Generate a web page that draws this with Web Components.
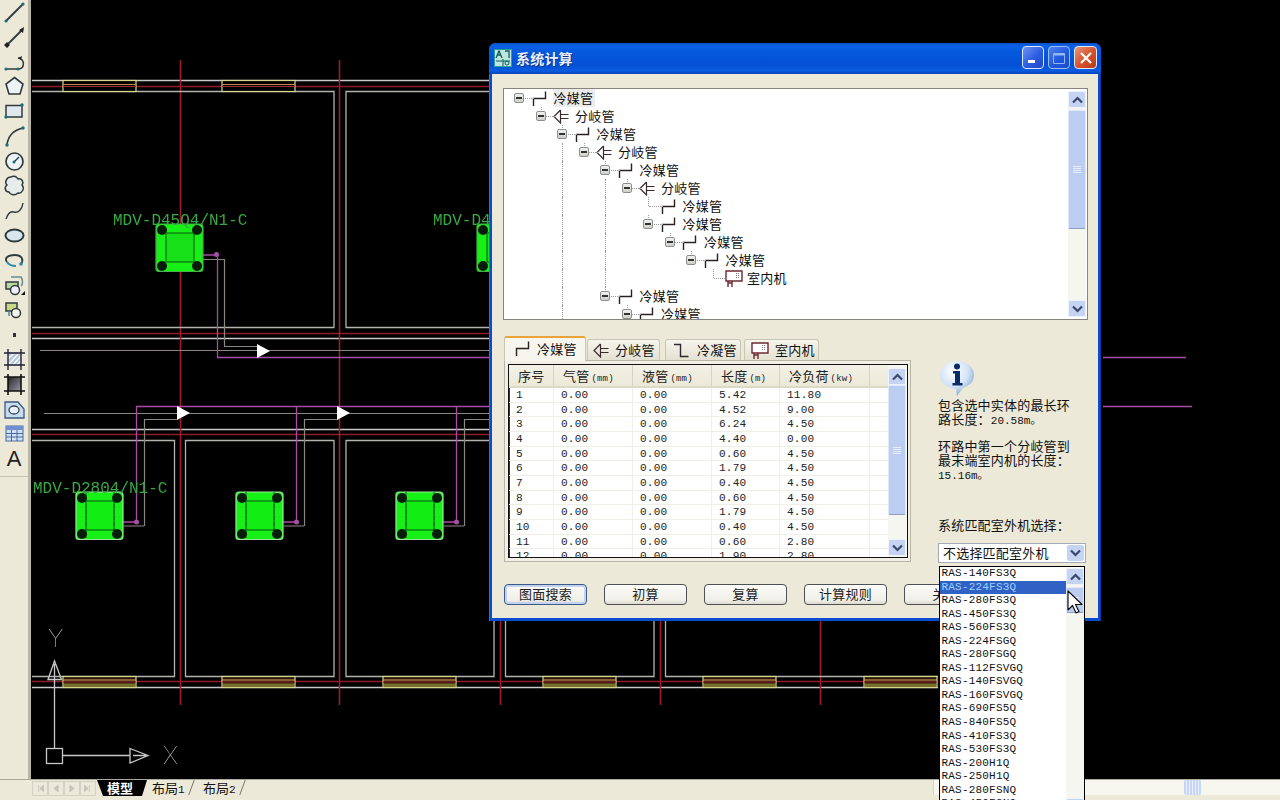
<!DOCTYPE html>
<html lang="zh"><head><meta charset="utf-8"><title>系统计算</title>
<style>
html,body{margin:0;padding:0;width:1280px;height:800px;overflow:hidden;background:#ece9d8;font-family:"Noto Sans CJK SC",sans-serif}
</style></head><body>
<cad-app>
  <cad-toolbar slot="tools"></cad-toolbar>
  <cad-drawing slot="canvas"></cad-drawing>
  <cad-status slot="status"></cad-status>
  <xp-window slot="window" caption="系统计算"><calc-dialog></calc-dialog></xp-window>
</cad-app>
<script>
const CJK='"Noto Sans CJK SC",sans-serif', MONO='"Liberation Mono","Noto Sans CJK SC",monospace';
function def(name,html,init){
  customElements.define(name,class extends HTMLElement{
    connectedCallback(){
      if(this.shadowRoot)return;
      const s=this.attachShadow({mode:'open'});
      s.innerHTML=typeof html==='function'?html(this):html;
      if(init)init(this,s);
    }
  });
}
const ICON={
 pipe:'<svg width="15" height="15" viewBox="0 0 15 15"><path d="M1.5 15V7.5H13.5V.5" fill="none" stroke="#2a2022" stroke-width="1.4"/></svg>',
 branch:'<svg width="16" height="15" viewBox="0 0 16 15"><path d="M7.5 1L1 7.5L7.5 14V1M7.5 5.5H15.5M7.5 9.5H15.5" fill="none" stroke="#3a2a2c" stroke-width="1.2"/></svg>',
 cond:'<svg width="16" height="15" viewBox="0 0 16 15"><path d="M1 1.5H7.5V13.5H15.5" fill="none" stroke="#2a2a30" stroke-width="1.4"/></svg>',
 unit:'<svg width="18" height="17" viewBox="0 0 18 17"><path d="M1 1H17V11H1ZM3 11V17M7 11V17M3 13H7" fill="#fff" stroke="#6e2a30" stroke-width="1.4"/><path d="M11 3h1v1h-1zM13 3h1v1h-1zM11 5h1v1h-1zM13 5h1v1h-1zM11 7h1v1h-1zM13 7h1v1h-1z" fill="#777"/></svg>'
};
/* ---------- toolbar ---------- */
const S='#2f3a3c', T='#1f6f78';
const TOOLS=[
 `<path d="M3 20L20 3" stroke="${S}" stroke-width="1.8"/><circle cx="3" cy="20" r="1.6" fill="${T}"/><circle cx="20" cy="3" r="1.6" fill="${T}"/>`,
 `<path d="M3 20L20 3" stroke="${S}" stroke-width="1.8"/><path d="M1 19l3 3 3-3-3-3zM16 4l5-3-1 6z" fill="#222"/>`,
 `<path d="M3 19H16C22 18 22 9 15 8" fill="none" stroke="${S}" stroke-width="1.5"/><path d="M15 8l4-2-1 4z" fill="#222"/><circle cx="3" cy="19" r="1.6" fill="${T}"/><circle cx="15" cy="19" r="1.6" fill="${T}"/>`,
 `<path d="M11.500 2.500L20 9 17 19H6L3 9Z" fill="#eef4f4" stroke="${S}" stroke-width="1.6"/>`,
 `<path d="M3 5.500H19V17H3Z" fill="#dfe9ee" stroke="${S}" stroke-width="1.5"/><circle cx="19" cy="5" r="1.7" fill="${T}"/><circle cx="3" cy="17" r="1.7" fill="${T}"/>`,
 `<path d="M4 20C5 11 11 5 20 3" fill="none" stroke="${S}" stroke-width="1.6"/><circle cx="4" cy="20" r="1.7" fill="${T}"/><circle cx="20" cy="3" r="1.7" fill="${T}"/>`,
 `<circle cx="11.500" cy="11.500" r="8.500" fill="#eef3f6" stroke="${S}" stroke-width="1.7"/><path d="M11 12L16 7" stroke="#245" stroke-width="1.4"/><circle cx="11" cy="12" r="1.500" fill="${T}"/>`,
 `<path d="M8 3C11 1 14 3 15 5C19 4 21 8 19 11C22 14 19 20 15 19C12 22 7 21 6 18C2 18 1 13 4 11C1 8 4 3 8 3Z" fill="#e6ecec" stroke="${S}" stroke-width="1.5"/>`,
 `<path d="M3 20C5 14 8 12 11 13C15 14 19 11 20 4" fill="none" stroke="${S}" stroke-width="1.4"/>`,
 `<ellipse cx="11.500" cy="11.500" rx="9" ry="6" fill="#d8e6ee" stroke="${S}" stroke-width="2"/>`,
 `<path d="M18 15C21 11 19 6 12 6C5 6 1 9 4 13" fill="none" stroke="${S}" stroke-width="1.800"/><path d="M4 13C6 16 9 17 13 17" fill="none" stroke="#2b8aa8" stroke-width="2"/><circle cx="18" cy="15" r="1.800" fill="#2b8aa8"/>`,
 `<path d="M3 8H15V15H3Z" fill="#b8d8a0" stroke="${S}" stroke-width="1.500"/><path d="M8 3H18C20 6 20 10 18 12" fill="none" stroke="#6a8a90" stroke-width="1.500"/><circle cx="12" cy="16" r="4.500" fill="#eef" stroke="${S}" stroke-width="1.500"/><path d="M18 21l4-4v4z" fill="#111"/>`,
 `<path d="M3 5H14V13H3Z" fill="#c8d888" stroke="${S}" stroke-width="1.500"/><circle cx="13" cy="15" r="4.500" fill="#f4f4e8" stroke="${S}" stroke-width="1.500"/><path d="M6 13V18" stroke="#48a" stroke-width="1.500"/>`,
 `<rect x="10" y="10" width="3" height="4" fill="#333"/>`,
 `<path d="M5 4H18V18H5Z" fill="#b8c8e0"/><path d="M6 16L16 5M9 18L18 8M5 11L11 5M13 18L18 13" stroke="#fff" stroke-width="1.200"/><path d="M1 5H22M1 17H22M5 1V22M18 1V22" stroke="#223" stroke-width="1.400"/>`,
 `<defs><linearGradient id="g" x1="0" y1="0" x2="1" y2="1"><stop offset="0" stop-color="#222"/><stop offset="1" stop-color="#99a"/></linearGradient></defs><path d="M5 4H18V18H5Z" fill="url(#g)"/><path d="M1 4H22M1 18H22M5 1V22M18 1V22" stroke="#111" stroke-width="1.600"/>`,
 `<path d="M2 4H15L21 11V20H2Z" fill="#c8dcf0" stroke="#3a5a80" stroke-width="1.300"/><ellipse cx="11" cy="12" rx="5" ry="4" fill="#e8f0f8" stroke="#345" stroke-width="1.300"/>`,
 `<rect x="3" y="4" width="17" height="15" fill="#cfe0f6" stroke="#4a6a9a"/><rect x="3" y="4" width="17" height="4" fill="#6f8fd0"/><path d="M3 11.500H20M3 15H20M8.500 8V19M14 8V19" stroke="#4a6a9a"/>`
];
def('cad-toolbar',`<style>
:host{display:block;background:#ece9d8;box-sizing:border-box;border-right:3px solid #b9b6a6;height:100%}
.bar{display:grid;grid-auto-rows:24.800px;border-bottom:1px solid #c4c1b0;height:477px;box-sizing:border-box}
.b{display:flex;align-items:center;justify-content:center}
.a{font:22px/24px "Liberation Sans",sans-serif;color:#222}
svg{display:block}
</style><div class="bar">${TOOLS.map(t=>`<div class="b"><svg width="23" height="23" viewBox="0 0 23 23">${t}</svg></div>`).join('')}<div class="b a">A</div></div>`);
/* ---------- drawing ---------- */
function unit(x,y,kind){
  const edge=kind?'#9fe6a0':'#48b048', dark='#0b6b12';
  const cs=[[x+6,y+6],[x+41,y+6],[x+6,y+42],[x+41,y+42]].map(c=>`<circle cx="${c[0]}" cy="${c[1]}" r="5" fill="#061c06"/>`).join('');
  return `<rect x="${x}" y="${y}" width="47" height="47.500" rx="3" fill="#16f016" stroke="${edge}" stroke-width="1.200"/>
  <rect x="${x+10}" y="${y+9}" width="28" height="29" fill="${kind?'#12ee14':'#18e018'}" stroke="${dark}" stroke-width="1.200"/>
  ${kind?`<path d="M${x+10} ${y}V${y+47}M${x+38} ${y}V${y+47}" stroke="${dark}" stroke-dasharray="4 2"/>`:''}${cs}`;
}
const arrow=(x,y)=>`<path d="M${x} ${y-7}L${x+13} ${y}L${x} ${y+7}Z" fill="#fff"/>`;
const win=(x,y)=>`<rect x="${x}" y="${y}" width="73" height="11" fill="#000" stroke="#d8d88c" stroke-width="1.200"/><path d="M${x} ${y+4}H${x+73}" stroke="#c88848"/><path d="M${x} ${y+6}H${x+73}" stroke="#9c2830"/>`;
const winB=(x,y)=>`<rect x="${x}" y="${y}" width="73" height="11" fill="#2a1a08" stroke="#d8d88c" stroke-width="1.200"/><path d="M${x} ${y+3.500}H${x+73}" stroke="#e8a060" stroke-width="1.200"/><path d="M${x} ${y+5.500}H${x+73}" stroke="#8c2028"/><rect x="${x+1}" y="${y+7}" width="71" height="3.500" fill="#77702c"/>`;
const GRAY='#8c8680',WALL='#b4b2ae',WHITE='#c8c8c8',RED='#8e1c28',VRED='#a31c2c',MAG='#a84ca8';
const DRAW=`<g class="soft">
<path d="M32 80.500H490M32 338.500H490M32 429.500H490M32 687.500H938" stroke="${WHITE}" stroke-width="1.300" fill="none"/>
<path d="M32 86.500H490M32 333.500H490M32 434.500H490M32 681.500H938" stroke="${RED}" stroke-width="1.500" fill="none"/>
<path d="M180.500 60V705M339.500 60V705M500.500 610V705M660.500 610V705M820.500 610V705" stroke="${VRED}" stroke-width="1.500" fill="none"/>
<path d="M32 91.500H334V327.500H32M490 91.500H346V327.500H490" stroke="${WALL}" stroke-width="1.300" fill="none"/>
<path d="M32 440.500H174.500V676.500H32M185.500 676.500V440.500H334V676.500ZM490 440.500H346V676.500H494V610M505.500 610V676.500H654V610M665.500 610V676.500H938" stroke="${WALL}" stroke-width="1.300" fill="none"/>
${win(63,80.500)}${win(222,80.500)}
${winB(63,676.500)}${winB(222,676.500)}${winB(383,676.500)}${winB(543,676.500)}${winB(703,676.500)}${winB(864,676.500)}
<path d="M40 350.500H490M44 413.500H490" stroke="${GRAY}" stroke-width="1.200" fill="none"/>
<path d="M203 259.500H224.500V346.500H258M144.500 526V419.500H177M304.500 526V419.500H337M464.500 526V419.500H490M124 526H144M284 526H304M444 526H464" stroke="${GRAY}" stroke-width="1.200" fill="none"/>
<path d="M217.500 255V357.500H490M136.500 522V406.500H490M296.500 522V406.500M456.500 522V406.500M203 255H217M123 522H136M283 522H296M443 522H456M1103 357.500H1186M1103 406.500H1192" stroke="${MAG}" stroke-width="1.300" fill="none"/>
<g fill="${MAG}"><circle cx="216.500" cy="254.500" r="2.500"/><circle cx="136.500" cy="522" r="2.500"/><circle cx="296.500" cy="522" r="2.500"/><circle cx="456.500" cy="522" r="2.500"/></g>
${arrow(257,351)}${arrow(177,413)}${arrow(337,413)}
${unit(156,224,0)}${unit(477,224,0)}${unit(76,492,1)}${unit(236,492,1)}${unit(396,492,1)}
<g font-family="Liberation Mono,monospace" font-size="16" fill="#38a844">
<text x="113" y="225">MDV-D45Q4/N1-C</text><text x="433" y="225">MDV-D4</text><text x="33" y="493">MDV-D2804/N1-C</text></g>
<g fill="none" stroke="#c8c8c8" stroke-width="1.300">
<rect x="46.500" y="748.500" width="16" height="15"/><path d="M54.500 748V680M63 755.500H130M48 679.500L54.500 661L61.500 679.500ZM130 748.500L148 755.500L130 763ZM54.500 664V679M133 755.500H146"/></g>
<g font-family="Inter,Liberation Sans,sans-serif" font-weight="100" font-size="24" fill="#d0d0d0"><text x="48" y="647">Y</text><text x="163" y="764">X</text></g></g>`;
def('cad-drawing',`<style>:host{display:block;background:#000;overflow:hidden;height:100%}svg{display:block}.soft{filter:blur(.35px)}</style>
<svg width="1249" height="779" viewBox="31 0 1249 779">${DRAW}</svg>`);
/* ---------- status strip ---------- */
const navs=['M8 3V12M15 3L10 7.500L15 12Z','M13 3L7 7.500L13 12Z','M7 3L13 7.500L7 12Z','M5 3L10 7.500L5 12ZM12 3V12'];
def('cad-status',`<style>
:host{display:flex;align-items:flex-start;height:21px;background:#ece9d8;border-top:1px solid #aaa89a;box-sizing:border-box;font:13px/15px ${CJK};color:#111;padding-left:32px}
.nav{display:flex;width:64px;height:15px;margin-top:1px}
.nav div{flex:1;border:1px solid #d4d2c4;box-sizing:border-box}
.nav svg{display:block;width:100%;height:100%}
.tab{position:relative;height:16px;box-sizing:border-box;white-space:nowrap}
.tab.on{width:50px;margin-left:1px;background:#000;color:#fff;clip-path:polygon(0 0,100% 0,90% 100%,12% 100%);padding-left:10px;font-weight:700}
.tab.off{width:51px;padding-left:5px}
.tab.off::after{content:"";position:absolute;right:6px;top:0;height:15px;border-right:1px solid #77756a;transform:skewX(-20deg)}
.n{font:11px/15px ${MONO}}
.fill{flex:1}
.track{width:347px;height:15px;background:#f7f6ef;display:flex;padding-left:250px;box-sizing:border-box;border-left:1px solid #d8d6c8}
.thumb{width:17px;height:15px;background:repeating-linear-gradient(90deg,#c5d6f6 0 2px,#e9effb 2px 3px);border-radius:2px}
</style>
<div class="nav">${navs.map(d=>`<div><svg viewBox="0 0 20 15"><path d="${d}" fill="#c8c6b8" stroke="#bdbbac"/></svg></div>`).join('')}</div>
<div class="tab on">模型</div><div class="tab off">布局<span class="n">1</span></div><div class="tab off">布局<span class="n">2</span></div>
<div class="fill"></div><div class="track"><div class="thumb"></div></div>`);
/* ---------- app ---------- */
def('cad-app',`<style>
:host{display:grid;position:relative;width:1280px;height:800px;overflow:hidden;grid-template-columns:31px 1fr;grid-template-rows:779px 21px;background:#ece9d8}
.t{grid-row:1;grid-column:1}.c{grid-row:1;grid-column:2}.s{grid-row:2;grid-column:1/3}
.w{position:absolute;left:489px;top:43px;z-index:2}
</style>
<div class="t"><slot name="tools"></slot></div><div class="c"><slot name="canvas"></slot></div><div class="s"><slot name="status"></slot></div><div class="w"><slot name="window"></slot></div>`);
/* ---------- window ---------- */
def('xp-window',h=>`<style>
:host{display:block;width:612px;height:578px;font:13px/14px ${CJK};color:#111}
.frame{height:100%;display:flex;flex-direction:column;box-sizing:border-box;border-radius:7px 7px 0 0;background:#0a4cd0;padding:0 3px 3px;box-shadow:inset 1px 0 #2a6cf0,inset -1px 0 #073aa8}
.tb{height:31px;flex:none;margin:0 -3px;padding:0 4px 2px 5px;box-sizing:border-box;display:flex;align-items:center;border-radius:7px 7px 0 0;background:linear-gradient(#0a50c8 0,#0a62e6 10%,#0558dc 30%,#0450d4 70%,#0a5ce0 90%,#0442b8 100%)}
.ic{flex:none;display:block;margin-right:4px}
.cap{flex:1;font:700 14px/18px ${CJK};color:#e8f0ff;letter-spacing:.2px;text-shadow:1px 1px #0a2f8a}
.btn{flex:none;width:22px;height:23px;margin-left:4px;border:1px solid #dfe8fb;border-radius:4px;box-sizing:border-box;background:linear-gradient(135deg,#6d95f2,#2d5be0 55%,#2148c8);display:flex;align-items:center;justify-content:center}
.max{opacity:.7}
.close{background:linear-gradient(135deg,#e89578,#d5512a 55%,#b93a18);width:23px}
.body{flex:1;background:#ece9d8;min-height:0}
</style>
<div class="frame"><div class="tb">
<svg class="ic" width="18" height="18" viewBox="0 0 18 18"><rect width="18" height="18" fill="#2f9f9a"/><rect x="1" y="1" width="16" height="16" fill="#bfe6dd"/><path d="M2 9L5 2L8 9M3 6H7M11 2H15V9" fill="none" stroke="#0c5f62" stroke-width="1.300"/><path d="M2 12H16M9 10V17" stroke="#0c5f62"/><circle cx="13" cy="14" r="2" fill="none" stroke="#0c5f62"/></svg>
<div class="cap">${h.getAttribute('caption')}</div>
<div class="btn"><svg width="14" height="14"><rect x="2" y="9" width="7" height="3" fill="#fff"/></svg></div>
<div class="btn max"><svg width="14" height="14"><path d="M1.500 2.500H12.500V12.500H1.500Z" fill="none" stroke="#cfe0ff"/><path d="M1.500 3.500H12.500" stroke="#cfe0ff" stroke-width="2"/></svg></div>
<div class="btn close"><svg width="14" height="14"><path d="M2 2L12 12M12 2L2 12" stroke="#fff" stroke-width="2.200"/></svg></div>
</div><div class="body"><slot></slot></div></div>`);
/* ---------- scrollbar ---------- */
const chev=d=>`<svg width="11" height="8" viewBox="0 0 11 8"><path d="${d}" fill="none" stroke="#39496e" stroke-width="2.200"/></svg>`;
def('xp-scroll',h=>`<style>
:host{display:grid;width:18px;height:100%;box-sizing:border-box;background:#f6f6f0;grid-template-rows:17px ${h.getAttribute('top')||0}px ${h.getAttribute('thumb')||60}px 1fr 17px}
.b{background:#c5d4f2;border:1px solid #eef2fb;border-radius:2px;display:flex;align-items:center;justify-content:center;box-sizing:border-box}
.th{grid-row:3;background:#bccdf2;border:1px solid #dfe7f8;border-bottom-color:#8d9dbd;border-radius:2px;display:flex;flex-direction:column;align-items:center;justify-content:center;gap:1px;box-sizing:border-box}
.th i{display:block;width:8px;height:1px;background:#e8eefb}
.up{grid-row:1}.dn{grid-row:5}
</style>
<div class="b up">${chev('M1 6.500L5.500 2L10 6.500')}</div><div class="th"><i></i><i></i><i></i><i></i></div><div class="b dn">${chev('M1 1.500L5.500 6L10 1.500')}</div>`);
/* ---------- tree ---------- */
const P='冷媒管',B='分岐管',U='室内机';
const TREE=[[0,1,'pipe',P,[]],[1,1,'branch',B,[]],[2,1,'pipe',P,[]],[3,1,'branch',B,[2]],[4,1,'pipe',P,[2]],[5,1,'branch',B,[2,4]],
[6,0,'pipe',P,[2,4]],[6,1,'pipe',P,[2,4]],[7,1,'pipe',P,[2,4]],[8,1,'pipe',P,[2,4]],[9,0,'unit',U,[2,4]],[4,1,'pipe',P,[2]],[5,1,'pipe',P,[2]]];
def('tree-view',`<style>
:host{display:flex;width:585px;height:232px;box-sizing:border-box;background:#fff;border:1px solid #86857b;overflow:hidden;padding:0 1px 0 2px}
.list{flex:1;overflow:hidden;padding-left:3px}
.r{display:flex;align-items:center;height:18px;font:13px/18px ${CJK};letter-spacing:.2px;color:#111;white-space:nowrap}
.cell{position:relative;flex:none;width:21.500px;height:100%}
.cell.g::before{content:"";position:absolute;left:10px;top:0;bottom:0;border-left:1px dotted #9a9a9a}
.cell.ex::after{content:"";position:absolute;left:11px;right:-3px;top:9px;border-top:1px dotted #9a9a9a}
.cell.st::before{content:"";position:absolute;left:10px;top:0;height:9px;border-left:1px dotted #9a9a9a}
.box{position:absolute;left:5px;top:4px;width:10px;height:10px;z-index:1;box-sizing:border-box;border:1px solid #8a8f8f;border-radius:2px;background:linear-gradient(#f0f0f0,#cfcfc8)}
.box::after{content:"";position:absolute;left:1px;top:3px;width:6px;height:2px;background:#333}
.ic{flex:none;width:18px;margin-left:1px;display:flex;align-items:center;justify-content:flex-start}
.ic svg{display:block}
.t{margin-left:3px;padding:0 2px 0 1px}
.sel{background:#ececec}
.sb{flex:none;padding:2px 0;box-sizing:border-box}
</style>
<div class="list" id="l"></div><div class="sb"><xp-scroll top="2" thumb="119"></xp-scroll></div>`,(h,s)=>{
  s.getElementById('l').innerHTML=TREE.map((r,i)=>{
    let c='';
    for(let d=0;d<r[0];d++) c+=`<span class="cell ${r[4].includes(d)?'g':''}"></span>`;
    const st=i>0?'st':'';
    c+=`<span class="cell ex ${st}">${r[1]?'<span class="box"></span>':''}</span>`;
    return `<div class="r">${c}<span class="ic">${ICON[r[2]]}</span><span class="t ${i==0?'sel':''}">${r[3]}</span></div>`;
  }).join('');
});
/* ---------- tabs ---------- */
const TABS=[['pipe','冷媒管',82,10,7,0],['branch','分岐管',73,5,6,1],['cond','冷凝管',76,7,8,5],['unit','室内机',75,6,6,3]];
def('pipe-tabs',`<style>
:host{display:block;width:407px;height:226px}
.head{display:flex;height:24px;align-items:flex-end}
.tab{box-sizing:border-box;height:21px;display:flex;align-items:center;border:1px solid #c7c5b4;border-bottom:0;border-radius:3px 3px 0 0;background:linear-gradient(#f6f5ec,#e4e1d2);font:13px/16px ${CJK};letter-spacing:.2px;color:#111;white-space:nowrap}
.tab.on{height:25px;padding-bottom:2px;background:#f6f5ee;border-color:#c7c5b4;border-top:2px solid #e8a33a;position:relative;z-index:1;margin-bottom:-1px}
.tab svg{display:block;flex:none}
.panel{box-sizing:border-box;height:202px;border:1px solid #b8b6a8;background:#f2f0e4;padding:3px 2px 3px 3px}
</style>
<div class="head">${TABS.map((t,i)=>`<div class="tab ${i==0?'on':''}" style="width:${t[2]}px;padding-left:${t[3]}px;margin-left:${t[5]}px">${ICON[t[0]]}<span style="margin-left:${t[4]}px">${t[1]}</span></div>`).join('')}</div>
<div class="panel"><slot></slot></div>`);
/* ---------- data grid ---------- */
const ROWS=[['1','5.42','11.80'],['2','4.52','9.00'],['3','6.24','4.50'],['4','4.40','0.00'],['5','0.60','4.50'],['6','1.79','4.50'],['7','0.40','4.50'],['8','0.60','4.50'],['9','1.79','4.50'],['10','0.40','4.50'],['11','0.60','2.80'],['12','1.90','2.80']];
const COLS='45px 79px 79px 68px 90px 1fr';
def('data-grid',`<style>
:host{display:flex;height:100%;box-sizing:border-box;background:#fff;border:1px solid #111;box-shadow:inset 1px 1px #333;overflow:hidden}
.m{flex:1;min-width:0;overflow:hidden}
.h,.r{display:grid;grid-template-columns:${COLS}}
.h{height:23px;background:linear-gradient(#f3f1e6,#ece9d8);border-bottom:2px solid #dcd9c8;box-sizing:border-box;font:13px/22px ${CJK};color:#222}
.h div{padding-left:9px;border-right:1px solid #d6d3c2;white-space:nowrap;overflow:hidden;box-sizing:border-box}
.h div:last-child{border-right:0}
.h small{font:9px/22px ${MONO};margin-left:2px}
.r{height:14.670px;font:11.100px/14.670px ${MONO};color:#222;border-bottom:1px solid #efefe6;box-sizing:border-box}
.r div{padding-left:7px;border-right:1px solid #f0f0e8;white-space:nowrap;box-sizing:border-box}
.r div:last-child{border-right:0}
.sb{flex:none;background:#f6f6f0;padding:3px 0 1px;width:19px;box-sizing:border-box}
</style>
<div class="m"><div class="h"><div>序号</div><div>气管<small>(mm)</small></div><div>液管<small>(mm)</small></div><div>长度<small>(m)</small></div><div>冷负荷<small>(kw)</small></div><div></div></div>
${ROWS.map(r=>`<div class="r"><div>${r[0]}</div><div>0.00</div><div>0.00</div><div>${r[1]}</div><div>${r[2]}</div><div></div></div>`).join('')}</div>
<div class="sb"><xp-scroll top="0" thumb="130"></xp-scroll></div>`);
/* ---------- button ---------- */
def('xp-button',h=>`<style>
:host{display:block;width:83px;height:21px;box-sizing:border-box;border:1px solid #4d5156;border-radius:4px;background:linear-gradient(#fbfbf8,#f0efe8 80%,#dcd8cc);font:13px/18px ${CJK};color:#222;text-align:center;letter-spacing:.2px}
${h.hasAttribute('default')?':host{border-color:#3b5a8c;box-shadow:inset 0 0 0 2px #c3d2ef}':''}
</style><slot></slot>`);
/* ---------- combo ---------- */
const MODELS=['RAS-140FS3Q','RAS-224FS3Q','RAS-280FS3Q','RAS-450FS3Q','RAS-560FS3Q','RAS-224FSGQ','RAS-280FSGQ','RAS-112FSVGQ','RAS-140FSVGQ','RAS-160FSVGQ','RAS-690FS5Q','RAS-840FS5Q','RAS-410FS3Q','RAS-530FS3Q','RAS-200H1Q','RAS-250H1Q','RAS-280FSNQ','RAS-450FSNQ'];
def('xp-combo',`<style>
:host{display:block;position:relative;width:148px;height:20px}
.f{display:flex;height:20px;box-sizing:border-box;background:#fff;border:1px solid #a3a9b8;font:13px/18px ${CJK};letter-spacing:.2px;color:#111;padding-left:4px}
.f span{flex:1;white-space:nowrap}
.ar{flex:none;width:17px;height:16px;margin:1px;background:#c5d4f2;border-radius:2px;display:flex;align-items:center;justify-content:center}
.drop{position:absolute;left:1px;top:23px;width:146px;height:250px;box-sizing:border-box;background:#fff;border:1px solid #000;display:flex}
.items{flex:1;overflow:hidden;padding-top:0}
.it{height:13.550px;font:11px/13.550px ${MONO};color:#111;padding-left:1.500px;white-space:nowrap}
.it.sel{background:#2f62c4;color:#9fd0ff}
.sb{flex:none;padding-top:1px;height:100%;box-sizing:border-box}
.cur{position:absolute;left:127px;top:23px;display:block}
</style>
<div class="f"><span>不选择匹配室外机</span><div class="ar">${chev('M1 1.500L5.500 6L10 1.500')}</div></div>
<div class="drop"><div class="items">${MODELS.map((m,i)=>`<div class="it ${i==1?'sel':''}">${m}</div>`).join('')}</div>
<div class="sb"><xp-scroll top="2" thumb="26"></xp-scroll></div>
<svg class="cur" width="17" height="25" viewBox="0 0 17 25"><path d="M1 1V20L5.500 15.500L9 23L12 21.500L8.500 14.500H15Z" fill="#fff" stroke="#111" stroke-width="1.200" stroke-linejoin="round"/></svg></div>`);
/* ---------- dialog content ---------- */
def('calc-dialog',`<style>
:host{display:block;padding:14px 0 0 11px;font:13px/14px ${CJK};letter-spacing:.2px;color:#111}
.mid{display:flex;margin-top:16px;margin-left:1px;height:226px}
.side{margin-left:27px;width:148px;padding-top:24px;display:flex;flex-direction:column}
.info{display:block;flex:none;margin-left:1px}
p{margin:1px 0 0;width:138px}
p+p{margin-top:11px}
.n{font:11px/13px ${MONO};letter-spacing:0}
.lbl{margin-top:35px;margin-bottom:11px;white-space:nowrap}
.btns{display:flex;gap:17px;margin:22px 0 0 1px}
</style>
<tree-view></tree-view>
<div class="mid">
<pipe-tabs><data-grid></data-grid></pipe-tabs>
<div class="side">
<svg class="info" width="36" height="37" viewBox="0 0 36 37"><defs><radialGradient id="b" cx=".4" cy=".3" r=".8"><stop offset="0" stop-color="#fff"/><stop offset=".55" stop-color="#d2e2f6"/><stop offset="1" stop-color="#6f92c4"/></radialGradient></defs><path d="M18 1C27 1 35 7 35 15C35 22 30 26 24 28L18 36L17 29C8 28 1 23 1 15C1 7 9 1 18 1Z" fill="url(#b)"/><circle cx="18" cy="6.500" r="3" fill="#0a2c66"/><path d="M14 11H21V23H23.500V25.500H13.500V23H16V13.500H14Z" fill="#0a2c66"/></svg>
<p>包含选中实体的最长环路长度：<span class="n">20.58m。</span></p>
<p>环路中第一个分岐管到最末端室内机的长度：<span class="n">15.16m。</span></p>
<div class="lbl">系统匹配室外机选择：</div>
<xp-combo></xp-combo>
</div></div>
<div class="btns"><xp-button default>图面搜索</xp-button><xp-button>初算</xp-button><xp-button>复算</xp-button><xp-button>计算规则</xp-button><xp-button>关闭</xp-button></div>`);
</script>
</body></html>
